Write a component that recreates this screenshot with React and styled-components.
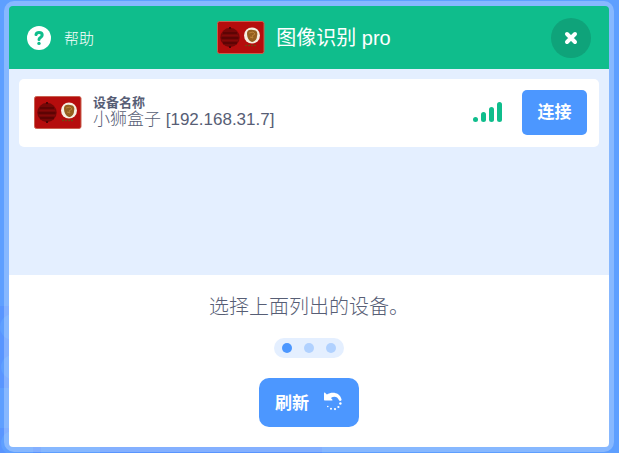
import React from 'react';
import styled, { createGlobalStyle } from 'styled-components';

const GlobalStyle = createGlobalStyle`
  *, *::before, *::after { box-sizing: border-box; }
  html, body { margin: 0; }
  body {
    background: #5e9fff;
    color: #575e75;
    font-family: "Liberation Sans", "Noto Sans CJK SC", sans-serif;
  }
  button { font: inherit; border: 0; cursor: pointer; }
`;

const Overlay = styled.div`
  position: relative;
  min-height: 100vh;
  display: flex;
  padding: 1px 5px 1px 4px;
`;

const Backdrop = styled.svg`
  position: absolute;
  left: 0;
  bottom: 0;
`;

const Modal = styled.main`
  position: relative;
  flex: 1;
  display: flex;
  flex-direction: column;
  border: 5px solid rgba(255, 255, 255, 0.26);
  border-radius: 10px;
`;

const Header = styled.header`
  display: grid;
  grid-template-columns: 1fr auto 1fr;
  align-items: center;
  height: 63px;
  padding: 0 18px;
  background: #0fbd8c;
  color: #fff;
  border-radius: 4px 4px 0 0;
`;

const HelpButton = styled.button`
  justify-self: start;
  display: flex;
  align-items: center;
  gap: 13px;
  padding: 0;
  background: none;
  color: inherit;
  font-size: 15px;
  font-weight: 300;
`;

const Title = styled.h1`
  display: flex;
  align-items: center;
  gap: 11px;
  margin: 0;
  padding-right: 10px;
  font-size: 20px;
  font-weight: 400;
  line-height: 24px;
`;

const CloseButton = styled.button`
  justify-self: end;
  display: grid;
  place-items: center;
  width: 40px;
  height: 40px;
  padding: 0;
  border-radius: 50%;
  background: #0fa37a;
`;

const DeviceList = styled.ul`
  flex: 1;
  margin: 0;
  padding: 10px;
  list-style: none;
  background: #e4efff;
`;

const DeviceRow = styled.li`
  display: flex;
  align-items: center;
  height: 68px;
  padding: 0 12px 2px 15px;
  background: #fff;
  border-radius: 5px;
`;

const DeviceText = styled.div`
  flex: 1;
  display: flex;
  flex-direction: column;
  margin-left: 11px;
`;

const DeviceLabel = styled.span`
  font-size: 13px;
  font-weight: 700;
  line-height: 15px;
`;

const DeviceName = styled.span`
  font-size: 17px;
  font-weight: 300;
  line-height: 20px;
`;

const Signal = styled.div`
  display: flex;
  align-items: flex-end;
  gap: 3px;
  margin-right: 20px;
`;

const SignalBar = styled.span`
  width: 5px;
  height: ${({ $level }) => $level * 5}px;
  border-radius: 3px;
  background: #0fbd8c;
`;

const PrimaryButton = styled.button`
  display: flex;
  align-items: center;
  justify-content: center;
  gap: 14px;
  min-width: 65px;
  height: ${({ $large }) => ($large ? 49 : 45)}px;
  padding: ${({ $large }) => ($large ? '0 16px 3px' : '0 15px 3px')};
  border-radius: ${({ $large }) => ($large ? 10 : 5)}px;
  background: #4c97ff;
  color: #fff;
  font-size: 17px;
  font-weight: 700;
`;

const Footer = styled.footer`
  display: flex;
  flex-direction: column;
  align-items: center;
  padding: 20px;
  background: #fff;
  border-radius: 0 0 4px 4px;
`;

const Instructions = styled.p`
  margin: 0 0 19px;
  font-size: 20px;
  font-weight: 300;
  line-height: 24px;
`;

const Steps = styled.div`
  display: flex;
  gap: 12px;
  margin-bottom: 20px;
  padding: 5px 8px;
  border-radius: 10px;
  background: #e4efff;
`;

const Step = styled.span`
  width: 10px;
  height: 10px;
  border-radius: 50%;
  background: ${({ $active }) => ($active ? '#4c97ff' : '#b0d1ff')};
`;

const BoxPicture = () => (
  <svg width="48" height="33" viewBox="0 0 48 33" aria-hidden="true">
    <rect x=".5" y=".5" width="46.5" height="32" rx="2" fill="#b50d0d" stroke="#c9604f" />
    <circle cx="13" cy="16.5" r="9.7" fill="#750707" />
    <path d="M6 12h14M4.5 17h17M6 22h14" stroke="#560505" strokeWidth="1.5" />
    <path d="M5 14.5h16M5 19.5h16" stroke="#850909" />
    <path d="M13 6v2M13 25v2" stroke="#4c0505" strokeWidth="2" />
    <circle cx="35" cy="14.5" r="8" fill="#f5eee0" />
    <path d="M30 12c0-3 3-4 6-3 4 0 5 3 4 6 0 4-3 6-5 6-3-1-5-4-5-9z" fill="#94601f" />
    <path d="M32 12l4-1 2 2-3 2 1 2-3-1" fill="none" stroke="#b98238" />
    <path d="M28 24.5h5M34 24.5h6" stroke="#754612" strokeWidth="1.5" strokeDasharray="2 1" />
  </svg>
);

const HelpIcon = () => (
  <svg width="24" height="24" viewBox="0 0 24 24" aria-hidden="true">
    <circle cx="12" cy="12" r="12" fill="#fff" />
    <path d="M9 8.6C9.3 7.3 10.4 6.5 12 6.5c2 0 3.2 1 3.2 2.6 0 2.4-3.2 2.3-3.2 4.4" fill="none" stroke="#0fbd8c" strokeWidth="3" strokeLinecap="round" />
    <circle cx="12" cy="17.4" r="1.7" fill="#0fbd8c" />
  </svg>
);

const CloseIcon = () => (
  <svg width="14" height="14" viewBox="0 0 14 14" aria-hidden="true">
    <path d="M3 3l8 8M11 3l-8 8" stroke="#fff" strokeWidth="4" strokeLinecap="round" />
  </svg>
);

const RefreshIcon = () => (
  <svg width="20" height="20" viewBox="0 0 20 20" aria-hidden="true">
    <path d="M1 2.3c0-.8.7-1 1.3-.4l1.6 1.6C8.7.2 16.7 1 18.5 8.2c.4 1.8-2 2.4-2.6.8-1.4-3.6-5-4.4-8-2l1.2 1.2c.7.7.4 1.3-.4 1.3H2c-.7 0-1-.4-1-1z" fill="#fff" />
    <g fill="#fff">
      <circle cx="17.4" cy="12.5" r="1.2" />
      <circle cx="15.4" cy="16" r="1.1" />
      <circle cx="12" cy="18.1" r="1.1" />
      <circle cx="8" cy="17.8" r="1" />
      <circle cx="4.8" cy="15.5" r=".8" />
    </g>
  </svg>
);

const BlockPattern = () => (
  <Backdrop width="322" height="147" viewBox="0 0 322 147" aria-hidden="true">
    <path d="M0 0h9v82H0zM0 122h12v25H0zM100 140h222v7H100z" fill="#5995ff" />
    <g fill="#5e9fff">
      <circle cx="13" cy="21" r="13" />
      <circle cx="13" cy="61" r="12" />
      <circle cx="13" cy="137" r="12" />
      <path d="M41 140h59v7H41z" />
    </g>
    <path d="M33 140h8v7h-8z" fill="#5995ff" />
  </Backdrop>
);

export default function App() {
  return (
    <>
      <GlobalStyle />
      <Overlay>
        <BlockPattern />
        <Modal>
          <Header>
            <HelpButton type="button"><HelpIcon />帮助</HelpButton>
            <Title><BoxPicture />图像识别 pro</Title>
            <CloseButton type="button" aria-label="关闭"><CloseIcon /></CloseButton>
          </Header>
          <DeviceList>
            <DeviceRow>
              <BoxPicture />
              <DeviceText>
                <DeviceLabel>设备名称</DeviceLabel>
                <DeviceName>小狮盒子 [192.168.31.7]</DeviceName>
              </DeviceText>
              <Signal role="img" aria-label="信号强度">
                {[1, 2, 3, 4].map((level) => <SignalBar key={level} $level={level} />)}
              </Signal>
              <PrimaryButton type="button">连接</PrimaryButton>
            </DeviceRow>
          </DeviceList>
          <Footer>
            <Instructions>选择上面列出的设备。</Instructions>
            <Steps>
              <Step $active />
              <Step />
              <Step />
            </Steps>
            <PrimaryButton type="button" $large>刷新<RefreshIcon /></PrimaryButton>
          </Footer>
        </Modal>
      </Overlay>
    </>
  );
}
